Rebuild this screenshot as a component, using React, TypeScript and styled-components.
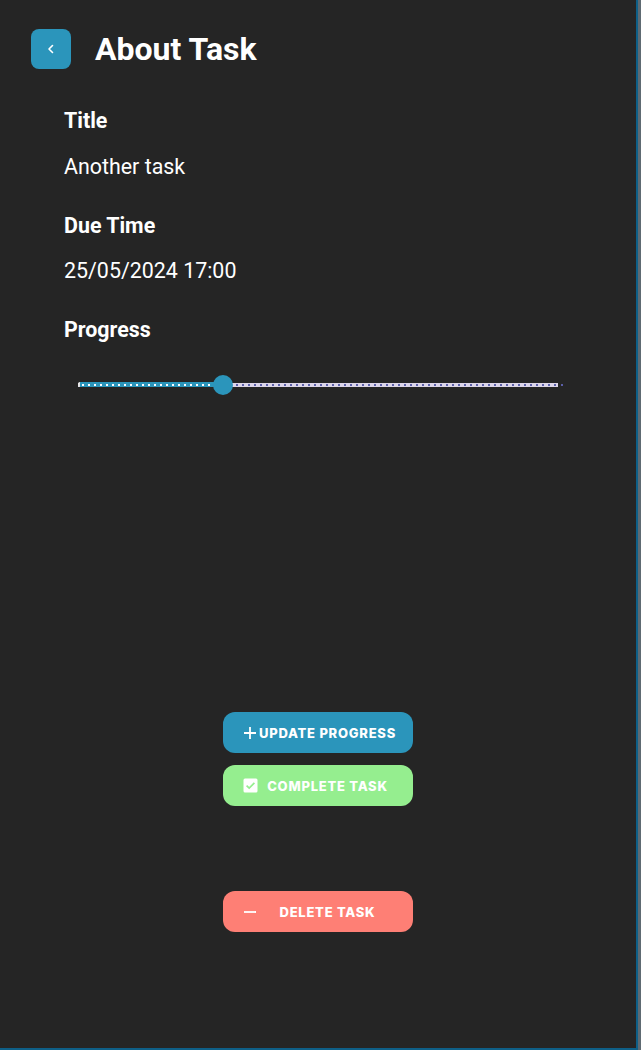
import React from 'react'
import styled, { createGlobalStyle } from 'styled-components'

const GlobalStyle = createGlobalStyle`
  html, body {
    margin: 0;
    padding: 0;
    background: #252525;
  }
  * {
    box-sizing: border-box;
  }
`

const blue = '#2b95bb'

const Window = styled.div`
  width: 641px;
  height: 1050px;
  padding-right: 3px;
  background: #5e6a72;
`

const Page = styled.div`
  height: 100%;
  background: #252525;
  border-right: 2px solid #0e5f87;
  border-bottom: 2px solid #0e5f87;
  font-family: Roboto, 'Liberation Sans', sans-serif;
  color: #ffffff;
  display: flex;
  flex-direction: column;
`

const Header = styled.div`
  display: flex;
  align-items: center;
  gap: 24px;
  padding: 29px 0 0 31px;
`

const BackButton = styled.button`
  width: 40px;
  height: 40px;
  border: none;
  border-radius: 8px;
  background: ${blue};
  display: flex;
  align-items: center;
  justify-content: center;
  padding: 0;
  cursor: pointer;
`

const PageTitle = styled.h1`
  margin: 0;
  font-size: 32px;
  font-weight: 700;
  line-height: 36px;
`

const Details = styled.div`
  display: flex;
  flex-direction: column;
  gap: 34px;
  padding: 39px 64px 0 64px;
`

const Field = styled.div`
  display: flex;
  flex-direction: column;
  gap: 20.5px;
`

const Label = styled.div`
  font-size: 21.4px;
  font-weight: 700;
  line-height: 25px;
`

const Value = styled.div`
  font-size: 21.4px;
  font-weight: 400;
  line-height: 25px;
`

const SliderArea = styled.div`
  padding: 19px 0 0 78px;
`

const SliderWrap = styled.div`
  position: relative;
  height: 48px;
  width: 480px;
`

const Track = styled.div`
  position: absolute;
  left: 0;
  right: 0;
  top: 22px;
  height: 4px;
  background-color: #dcd6ea;
  background-image: repeating-linear-gradient(
    to right,
    transparent 0 2px,
    #5b5fa8 2px 4px,
    transparent 4px 6px
  );
  background-size: 100% 2px;
  background-position: 0 1px;
  background-repeat: no-repeat;
`

const ActiveTrack = styled.div`
  position: absolute;
  left: 0;
  top: 21px;
  height: 5px;
  border-radius: 2px 0 0 2px;
  background-color: ${blue};
  background-image: repeating-linear-gradient(
    to right,
    transparent 0 2px,
    #ffffff 2px 4px,
    transparent 4px 6px
  );
  background-size: 100% 2px;
  background-position: 0 1.5px;
  background-repeat: no-repeat;
  border-left: 2px solid #e8e8e8;
`

const Thumb = styled.div`
  position: absolute;
  top: 14px;
  width: 20px;
  height: 20px;
  margin-left: -10px;
  border-radius: 50%;
  background: ${blue};
`

const EndDot = styled.div`
  position: absolute;
  right: -5px;
  top: 23px;
  width: 2px;
  height: 2px;
  background: #5b5fa8;
`

const Actions = styled.div`
  display: flex;
  flex-direction: column;
  align-items: center;
  gap: 12px;
  margin-top: 303px;
`

const ActionButton = styled.button<{ $bg: string; $gapBefore?: number }>`
  width: 190px;
  height: 41px;
  border: none;
  border-radius: 12px;
  background: ${({ $bg }) => $bg};
  color: #ffffff;
  display: flex;
  align-items: center;
  padding: 0 16px 0 19px;
  margin-top: ${({ $gapBefore }) => ($gapBefore ? $gapBefore + 'px' : '0')};
  font-family: Inter, 'Open Sans', sans-serif;
  font-size: 13px;
  font-weight: 800;
  letter-spacing: 0.75px;
  cursor: pointer;
`

const IconBox = styled.span`
  width: 16px;
  height: 16px;
  display: flex;
  align-items: center;
  justify-content: center;
  flex-shrink: 0;
`

const ButtonText = styled.span`
  flex: 1;
  text-align: center;
  white-space: nowrap;
`

const Chevron = () => (
  <svg width="12" height="12" viewBox="0 0 12 12">
    <path d="M7.5 2.5 L4 6 L7.5 9.5" fill="none" stroke="#ffffff" strokeWidth="1.6" strokeLinecap="round" strokeLinejoin="round" />
  </svg>
)

const PlusIcon = () => (
  <svg width="14" height="14" viewBox="0 0 14 14">
    <path d="M7 1 V13 M1 7 H13" stroke="#ffffff" strokeWidth="1.8" />
  </svg>
)

const CheckBoxIcon = ({ color }: { color: string }) => (
  <svg width="15" height="15" viewBox="0 0 15 15">
    <rect x="0.5" y="0.5" width="14" height="14" rx="1.5" fill="#ffffff" />
    <path d="M3.6 7.6 L6.2 10.1 L11.4 4.8" fill="none" stroke={color} strokeWidth="1.7" />
  </svg>
)

const MinusIcon = () => (
  <svg width="14" height="14" viewBox="0 0 14 14">
    <path d="M1 7 H13" stroke="#ffffff" strokeWidth="1.8" />
  </svg>
)

export default function App() {
  const progress = 0.302

  return (
    <>
      <GlobalStyle />
      <Window>
        <Page>
          <Header>
            <BackButton aria-label="back">
              <Chevron />
            </BackButton>
            <PageTitle>About Task</PageTitle>
          </Header>
          <Details>
            <Field>
              <Label>Title</Label>
              <Value>Another task</Value>
            </Field>
            <Field>
              <Label>Due Time</Label>
              <Value>25/05/2024 17:00</Value>
            </Field>
            <Field>
              <Label>Progress</Label>
            </Field>
          </Details>
          <SliderArea>
            <SliderWrap>
              <Track />
              <ActiveTrack style={{ width: `${progress * 100}%` }} />
              <Thumb style={{ left: `${progress * 100}%` }} />
              <EndDot />
            </SliderWrap>
          </SliderArea>
          <Actions>
            <ActionButton $bg={blue}>
              <IconBox>
                <PlusIcon />
              </IconBox>
              <ButtonText>UPDATE PROGRESS</ButtonText>
            </ActionButton>
            <ActionButton $bg="#95ee8f">
              <IconBox>
                <CheckBoxIcon color="#95ee8f" />
              </IconBox>
              <ButtonText>COMPLETE TASK</ButtonText>
            </ActionButton>
            <ActionButton $bg="#fe7f75" $gapBefore={73}>
              <IconBox>
                <MinusIcon />
              </IconBox>
              <ButtonText>DELETE TASK</ButtonText>
            </ActionButton>
          </Actions>
        </Page>
      </Window>
    </>
  )
}
